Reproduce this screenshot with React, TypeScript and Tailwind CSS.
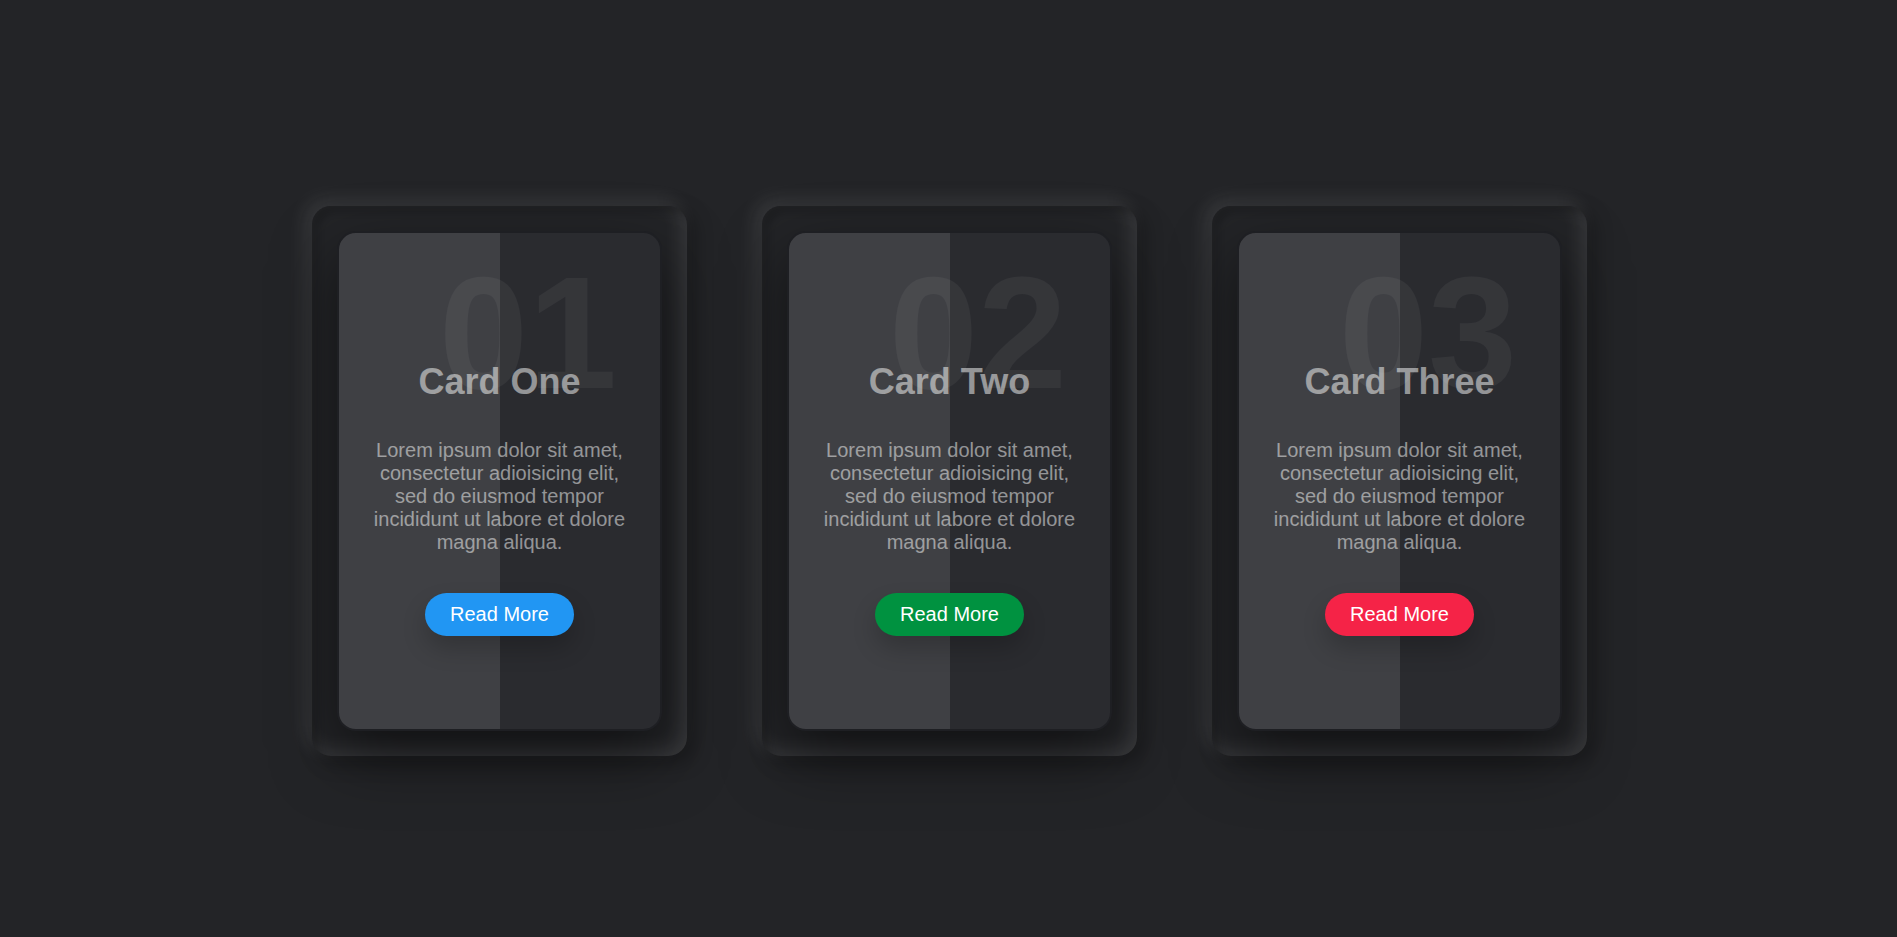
const cards = [
  { num: "01", title: "Card One", button: "bg-[#2196f3]" },
  { num: "02", title: "Card Two", button: "bg-[#009240]" },
  { num: "03", title: "Card Three", button: "bg-[#f52347]" },
];

const text =
  "Lorem ipsum dolor sit amet, consectetur adioisicing elit, sed do eiusmod tempor incididunt ut labore et dolore magna aliqua.";

function Card({ num, title, button }: { num: string; title: string; button: string }) {
  return (
    <div className="w-[375px] h-[550px] p-[25px] rounded-[18.75px] shadow-[inset_6.25px_6.25px_6.25px_rgba(0,0,0,0.2),inset_-6.25px_-6.25px_18.75px_rgba(255,255,255,0.1),6.25px_6.25px_18.75px_rgba(0,0,0,0.3),-6.25px_-6.25px_18.75px_rgba(255,255,255,0.1)]">
      <div className="relative h-full flex items-center justify-center overflow-hidden bg-[#2a2b2f] border-[2.5px] border-[#1e1f23] rounded-[18.75px] shadow-[0_25px_62.5px_rgba(0,0,0,0.5)]">
        <div className="absolute left-0 top-0 w-1/2 h-full bg-white/10 pointer-events-none" />
        <h2 className="absolute top-[20px] right-[43px] text-[160px] leading-none font-bold text-white/5 pointer-events-none">
          {num}
        </h2>
        <div className="p-[25px] text-center text-[20px] leading-[normal]">
          <h3 className="mt-[34.5px] mb-[36px] text-[36px] leading-[normal] font-bold text-white/50">{title}</h3>
          <p className="my-[20px] text-[20px] leading-[normal] font-light text-white/50">{text}</p>
          <a
            href="#"
            className={`relative inline-block mt-[18.75px] px-[25px] py-[10px] rounded-[25px] text-white text-[20px] leading-[normal] shadow-[0_12.5px_25px_rgba(0,0,0,0.2)] ${button}`}
          >
            Read More
          </a>
        </div>
      </div>
    </div>
  );
}

export default function App() {
  return (
    <div className="min-h-screen bg-[#232427] font-['Liberation_Sans',Arial,sans-serif]">
      <div className="flex justify-center gap-[75px] pt-[206px] pl-[2px]">
        {cards.map((c) => (
          <Card key={c.num} {...c} />
        ))}
      </div>
    </div>
  );
}
